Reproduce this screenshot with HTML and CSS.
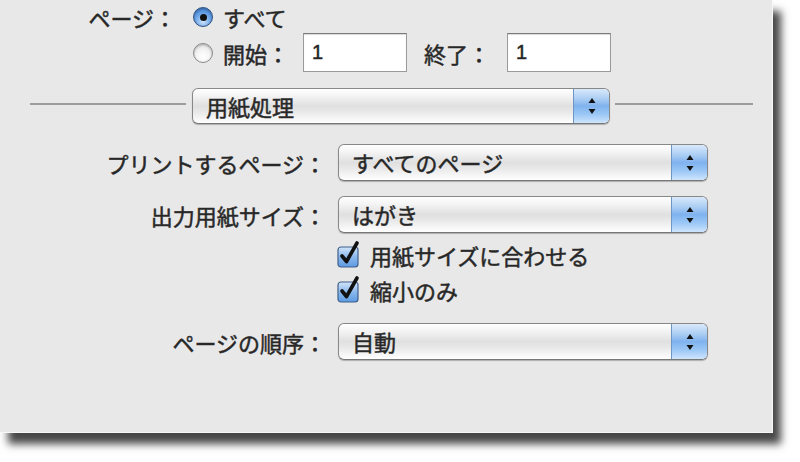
FILE: index.html
```html
<!DOCTYPE html>
<html lang="ja">
<head>
<meta charset="utf-8">
<title>用紙処理</title>
<link rel="stylesheet" href="styles.css">
</head>
<body>
<div class="panel">
  <div class="pages">
    <div class="pages-label">ページ：</div>
    <div class="pages-opts">
      <div class="opt opt-all">
        <span class="radio on"><span class="dot"></span></span>
        <span class="opt-text">すべて</span>
      </div>
      <div class="opt opt-range">
        <span class="radio"></span>
        <span class="opt-text">開始：</span>
        <span class="field field-from">1</span>
        <span class="opt-text to">終了：</span>
        <span class="field field-to">1</span>
      </div>
    </div>
  </div>

  <div class="sep-row">
    <span class="line line-left"></span>
    <div class="popup popup-section">
      <span class="popup-text">用紙処理</span>
      <span class="stepper">
        <svg width="10" height="18" viewBox="0 0 10 18"><path d="M5 1 L8.5 6 L1.5 6 Z M5 17 L8.5 12 L1.5 12 Z" fill="#111"/></svg>
      </span>
    </div>
    <span class="line line-right"></span>
  </div>

  <div class="form">
    <div class="frow r1">
      <div class="flabel">プリントするページ：</div>
      <div class="popup popup-field">
        <span class="popup-text">すべてのページ</span>
        <span class="stepper">
          <svg width="10" height="18" viewBox="0 0 10 18"><path d="M5 1 L8.5 6 L1.5 6 Z M5 17 L8.5 12 L1.5 12 Z" fill="#111"/></svg>
        </span>
      </div>
    </div>
    <div class="frow r2">
      <div class="flabel">出力用紙サイズ：</div>
      <div class="popup popup-field">
        <span class="popup-text">はがき</span>
        <span class="stepper">
          <svg width="10" height="18" viewBox="0 0 10 18"><path d="M5 1 L8.5 6 L1.5 6 Z M5 17 L8.5 12 L1.5 12 Z" fill="#111"/></svg>
        </span>
      </div>
    </div>
    <div class="crow c1">
      <span class="check">
        <svg width="26" height="28" viewBox="0 0 26 28">
          <defs>
            <linearGradient id="cg1" x1="0" y1="0" x2="0" y2="1">
              <stop offset="0" stop-color="#d3e5fa"/>
              <stop offset="0.5" stop-color="#8ab8ec"/>
              <stop offset="1" stop-color="#5d9be2"/>
            </linearGradient>
          </defs>
          <rect x="1" y="7" width="20" height="20" rx="3" fill="url(#cg1)" stroke="#3f5f8a" stroke-width="1.2"/>
          <path d="M5 16 L9.5 21.5 L20 3" fill="none" stroke="#111" stroke-width="3.6" stroke-linecap="round" stroke-linejoin="round"/>
        </svg>
      </span>
      <span class="ctext">用紙サイズに合わせる</span>
    </div>
    <div class="crow c2">
      <span class="check">
        <svg width="26" height="28" viewBox="0 0 26 28">
          <defs>
            <linearGradient id="cg2" x1="0" y1="0" x2="0" y2="1">
              <stop offset="0" stop-color="#d3e5fa"/>
              <stop offset="0.5" stop-color="#8ab8ec"/>
              <stop offset="1" stop-color="#5d9be2"/>
            </linearGradient>
          </defs>
          <rect x="1" y="7" width="20" height="20" rx="3" fill="url(#cg2)" stroke="#3f5f8a" stroke-width="1.2"/>
          <path d="M5 16 L9.5 21.5 L20 3" fill="none" stroke="#111" stroke-width="3.6" stroke-linecap="round" stroke-linejoin="round"/>
        </svg>
      </span>
      <span class="ctext">縮小のみ</span>
    </div>
    <div class="frow r3">
      <div class="flabel">ページの順序：</div>
      <div class="popup popup-field">
        <span class="popup-text">自動</span>
        <span class="stepper">
          <svg width="10" height="18" viewBox="0 0 10 18"><path d="M5 1 L8.5 6 L1.5 6 Z M5 17 L8.5 12 L1.5 12 Z" fill="#111"/></svg>
        </span>
      </div>
    </div>
  </div>
</div>
</body>
</html>
```

FILE: styles.css
```css
html, body {
  margin: 0;
  padding: 0;
  background: #ffffff;
}

body {
  width: 800px;
  height: 462px;
  overflow: hidden;
  font-family: "Noto Sans CJK JP", "Noto Sans", sans-serif;
  font-size: 22px;
  color: #262626;
  -webkit-text-stroke: 0.5px #2e2e2e;
}

.panel {
  width: 772px;
  height: 432px;
  background: #e8e8e8;
  border-right: 1px solid #f7f7f7;
  border-bottom: 1px solid #f7f7f7;
  box-shadow: 8px 11px 8px rgba(0, 0, 0, 0.72);
  display: flex;
  flex-direction: column;
}

/* ---- pages section ---- */
.pages {
  display: flex;
  padding-top: 5px;
}

.pages-label {
  width: 176px;
  text-align: right;
  line-height: 24px;
  height: 24px;
}

.pages-opts {
  margin-left: 17px;
  display: flex;
  flex-direction: column;
  gap: 4px;
}

.opt {
  display: flex;
  align-items: center;
}

.opt-all {
  height: 24px;
}

.opt-range {
  height: 39px;
}

.opt-text {
  line-height: 24px;
  margin-left: 10px;
}

.opt-text.to {
  margin-left: 17px;
  margin-right: 17px;
}

.field-from {
  margin-left: 14px;
}

.radio {
  width: 18px;
  height: 18px;
  border-radius: 50%;
  border: 1px solid #8a8a8a;
  background: radial-gradient(circle at 50% 70%, #ffffff 0%, #f3f3f3 45%, #d6d6d6 100%);
  box-shadow: inset 0 1px 2px rgba(0, 0, 0, 0.25);
  display: flex;
  align-items: center;
  justify-content: center;
}

.radio.on {
  border-color: #2d4f80;
  background: radial-gradient(circle at 50% 75%, #cfe4fb 0%, #6fa8ea 45%, #2f6fc4 100%);
}

.radio .dot {
  width: 7px;
  height: 7px;
  border-radius: 50%;
  background: #111;
}

.field {
  width: 94px;
  height: 37px;
  background: #ffffff;
  border: 1px solid #9a9a9a;
  border-top-color: #7a7a7a;
  box-shadow: inset 0 1px 1px rgba(0, 0, 0, 0.15);
  font-family: "Liberation Sans", Arial, sans-serif;
  font-size: 20px;
  line-height: 37px;
  padding-left: 8px;
  color: #222;
}

/* ---- separator with popup ---- */
.sep-row {
  display: flex;
  align-items: center;
  margin-top: 16px;
  height: 36px;
}

.line {
  height: 2px;
  background: #9d9d9d;
  margin-top: -5px;
}

.line-left {
  margin-left: 30px;
  width: 156px;
}

.line-right {
  width: 138px;
  margin-left: 5px;
}

.popup {
  display: flex;
  align-items: stretch;
  border: 1px solid #888;
  border-bottom-color: #777;
  border-radius: 6px;
  background: linear-gradient(#ffffff 0%, #f4f4f4 20%, #e0e0e0 50%, #e7e7e7 65%, #ffffff 100%);
  box-shadow: 0 1px 1px rgba(0, 0, 0, 0.25);
  box-sizing: border-box;
  overflow: hidden;
}

.popup-section {
  width: 418px;
  height: 36px;
  margin-left: 6px;
}

.popup-field {
  width: 370px;
  height: 37px;
}

.popup-text {
  flex: 1;
  padding-left: 13px;
  line-height: 34px;
  white-space: nowrap;
}

.stepper {
  width: 35px;
  display: flex;
  align-items: center;
  justify-content: center;
  background: linear-gradient(#d9e9fb 0%, #a9ccf3 30%, #7fb2ee 50%, #9cc8f6 75%, #cfe5fd 100%);
  border-left: 1px solid #6f95c4;
}

/* ---- form ---- */
.form {
  display: flex;
  flex-direction: column;
}

.frow {
  display: flex;
  align-items: center;
  height: 37px;
}

.flabel {
  width: 326px;
  margin-right: 12px;
  text-align: right;
  line-height: 24px;
  white-space: nowrap;
}

.r1 { margin-top: 20px; }
.r2 { margin-top: 15px; }
.r3 { margin-top: 20px; }

.crow {
  display: flex;
  align-items: center;
  height: 28px;
  padding-left: 337px;
}

.c1 { margin-top: 7px; }
.c2 { margin-top: 7px; }

.check {
  width: 26px;
  height: 28px;
  display: block;
}

.check svg {
  display: block;
}

.ctext {
  margin-left: 7px;
  line-height: 24px;
  margin-top: 2px;
}
```
